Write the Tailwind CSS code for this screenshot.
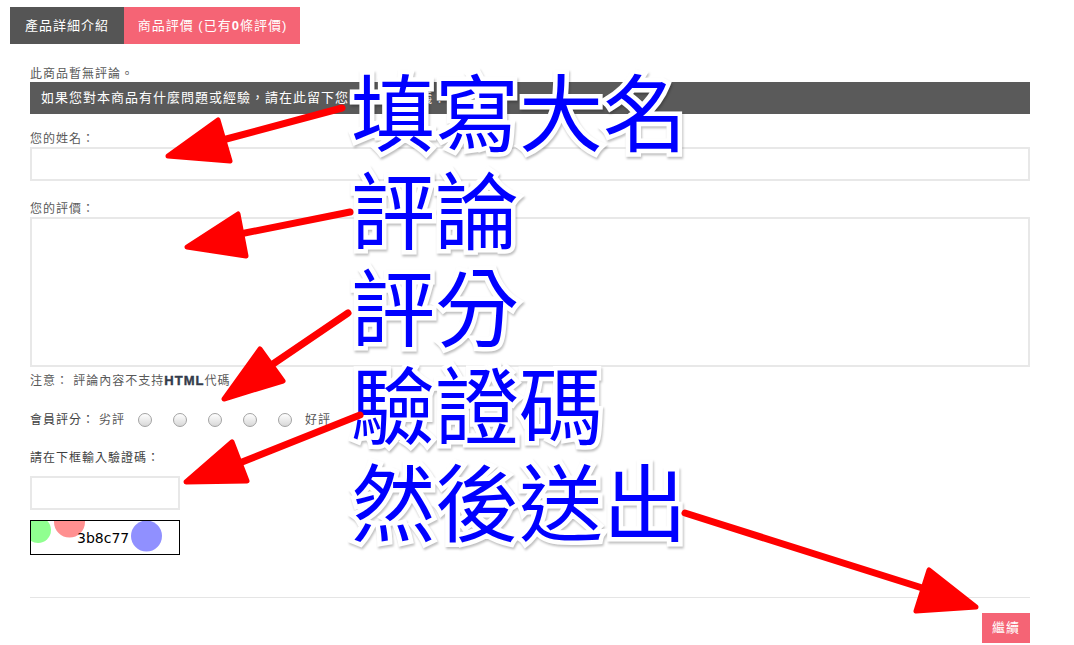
<!DOCTYPE html>
<html lang="zh-Hant">
<head>
  <meta charset="UTF-8" />
  <title>商品評價</title>
  <script src="https://cdn.jsdelivr.net/npm/@tailwindcss/browser@4"></script>
</head>
<body class="relative h-[645px] overflow-hidden bg-white font-['Liberation_Sans','Noto_Sans_CJK_TC',sans-serif] text-[12px] tracking-[1px] text-[#595959]">
  <!-- Tabs -->
  <div class="flex pt-[7px] pl-[10px] text-[13px] text-white">
    <div class="flex h-[37px] w-[114px] items-center justify-center bg-[#555555]">產品詳細介紹</div>
    <div class="flex h-[37px] w-[176px] items-center justify-center bg-[#f56475] pl-[1px]">商品評價 (已有<b>0</b>條評價)</div>
  </div>

  <!-- Review form -->
  <div class="mx-[30px] w-[1000px]">
    <p class="mt-[23px] h-[15px] leading-[15px]">此商品暫無評論。</p>
    <div class="flex h-[32px] items-center bg-[#5a5a5a] px-[11px] text-[13px] text-white">如果您對本商品有什麼問題或經驗，請在此留下您的意見和建議！</div>

    <label class="mt-[17px] block h-[16px] leading-[16px]">您的姓名：</label>
    <input type="text" class="block h-[34px] w-full border-2 border-[#e8e8e8] bg-white" />

    <label class="mt-[20px] block h-[16px] leading-[16px]">您的評價：</label>
    <textarea class="block h-[150px] w-full resize-none border-2 border-[#e8e8e8] bg-white"></textarea>

    <p class="mt-[6px] h-[16px] leading-[16px]">注意： 評論內容不支持<b class="text-[13px] text-[#333b4a] [-webkit-text-stroke:0.4px_#333b4a]">HTML</b>代碼</p>

    <div class="mt-[22px] flex h-[18px] items-center">
      <span class="w-[69px] text-[#3f3f3f]">會員評分：</span>
      <span class="w-[39px]">劣評</span>
      <div class="flex gap-[21px]">
        <input type="radio" name="rating" class="size-[14px] appearance-none rounded-full border border-[#a3a3a3] bg-linear-to-b from-white to-[#d8d8d8]" />
        <input type="radio" name="rating" class="size-[14px] appearance-none rounded-full border border-[#a3a3a3] bg-linear-to-b from-white to-[#d8d8d8]" />
        <input type="radio" name="rating" class="size-[14px] appearance-none rounded-full border border-[#a3a3a3] bg-linear-to-b from-white to-[#d8d8d8]" />
        <input type="radio" name="rating" class="size-[14px] appearance-none rounded-full border border-[#a3a3a3] bg-linear-to-b from-white to-[#d8d8d8]" />
        <input type="radio" name="rating" class="size-[14px] appearance-none rounded-full border border-[#a3a3a3] bg-linear-to-b from-white to-[#d8d8d8]" />
      </div>
      <span class="ml-[13px]">好評</span>
    </div>

    <label class="mt-[21px] block h-[16px] leading-[16px] text-[#3f3f3f]">請在下框輸入驗證碼：</label>
    <input type="text" class="mt-[10px] block h-[34px] w-[150px] border-2 border-[#e8e8e8] bg-white" />

    <svg class="mt-[10px] block border border-black" width="150" height="35" viewBox="0 0 148 33">
      <rect width="148" height="33" fill="#ffffff" />
      <circle cx="7" cy="9" r="13" fill="#90ff90" />
      <circle cx="38.5" cy="1" r="15.5" fill="#ff9090" />
      <circle cx="115.5" cy="15" r="15.5" fill="#9090ff" />
      <text x="46" y="22" font-family="'DejaVu Sans', sans-serif" font-size="14" letter-spacing="0" fill="#000000">3b8c77</text>
    </svg>

    <div class="mt-[42px] flex justify-end border-t border-[#e5e5e5] pt-[15px]">
      <button class="h-[30px] w-[48px] bg-[#f56475] text-[13px] text-white">繼續</button>
    </div>
  </div>

  <!-- Annotation text -->
  <div class="absolute top-[60px] left-[351px] text-[84px] leading-[97.5px] tracking-normal font-['Noto_Sans_CJK_TC',sans-serif] text-[#0000ff] [-webkit-text-stroke:9px_white] [paint-order:stroke_fill] drop-shadow-[1px_2px_1px_rgba(0,0,0,0.25)]">
    <div>填寫大名</div>
    <div>評論</div>
    <div>評分</div>
    <div>驗證碼</div>
    <div>然後送出</div>
  </div>

  <!-- Annotation arrows -->
  <svg class="absolute inset-0" width="1074" height="645" viewBox="0 0 1074 645">
    <g fill="#ff0000" stroke="#ff0000" stroke-linejoin="round" stroke-linecap="round">
      <path d="M342 108L215 142" stroke-width="7" />
      <path d="M168 156L218 120L230 161Z" stroke-width="5" />
      <path d="M350 212L235 235" stroke-width="7" />
      <path d="M187 247L238 214L246 256Z" stroke-width="5" />
      <path d="M348 313L270 366" stroke-width="7" />
      <path d="M224 399L260 349L283 381Z" stroke-width="5" />
      <path d="M360 415L232 466" stroke-width="7" />
      <path d="M186 482L232 442L247 481Z" stroke-width="5" />
      <path d="M685 513L935 592" stroke-width="7" />
      <path d="M976 607L929 570L916 611Z" stroke-width="5" />
    </g>
  </svg>
</body>
</html>
